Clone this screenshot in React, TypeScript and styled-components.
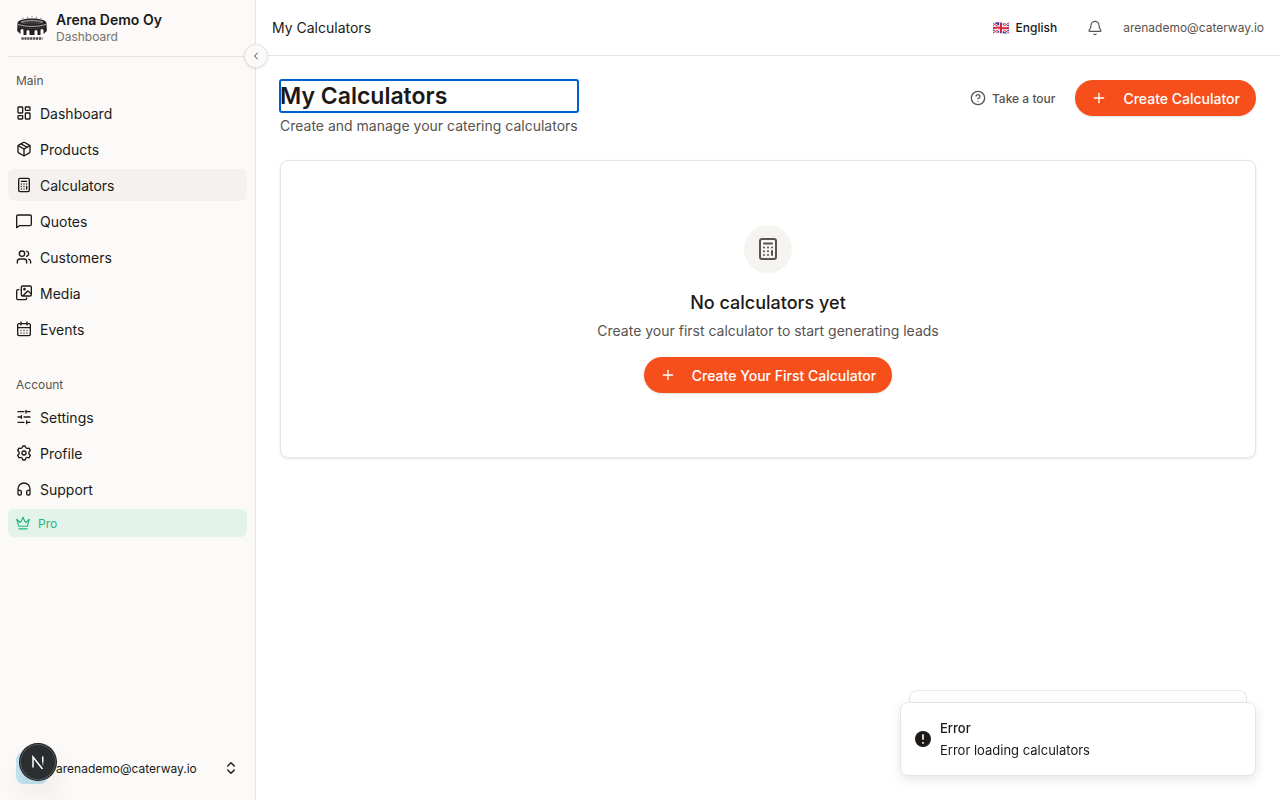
import React from "react";
import styled, { createGlobalStyle, css } from "styled-components";
import { Bell, ChevronLeft, ChevronsUpDown, CircleHelp, Headphones, LayoutDashboard, Package, Plus, Users } from "lucide-react";

const GlobalStyle = createGlobalStyle`
  *, *::before, *::after { box-sizing: border-box; }
  body {
    margin: 0;
    background: #fff;
    color: #1c1917;
    font-family: Inter, "Liberation Sans", sans-serif;
    font-size: 14px;
  }
  h1, h2, p, ul { margin: 0; padding: 0; }
  ul { list-style: none; }
  button { font: inherit; color: inherit; border: 0; padding: 0; background: none; cursor: pointer; }
  a { color: inherit; text-decoration: none; }
  svg { display: block; flex: none; }
`;

const Shell = styled.div`
  display: flex;
  min-height: 100vh;
`;

const Sidebar = styled.aside`
  position: sticky;
  top: 0;
  flex: none;
  display: flex;
  flex-direction: column;
  width: 256px;
  height: 100vh;
  padding: 0 8px 8px;
  background: #fbfaf8;
  border-right: 1px solid #e5e4e2;
`;

const Brand = styled.div`
  display: flex;
  align-items: center;
  gap: 8px;
  height: 57px;
  padding: 0 8px;
  border-bottom: 1px solid #e5e4e2;
`;

const BrandText = styled.div`
  display: flex;
  flex-direction: column;
`;

const BrandName = styled.span`
  font-size: 14px;
  font-weight: 600;
  line-height: 18px;
`;

const BrandSub = styled.span`
  font-size: 12px;
  line-height: 16px;
  color: #78716c;
`;

const CollapseButton = styled.button`
  position: absolute;
  top: 44px;
  right: -13px;
  z-index: 1;
  display: grid;
  place-items: center;
  width: 24px;
  height: 24px;
  border: 1px solid #e5e4e2;
  border-radius: 50%;
  background: #fbfaf8;
  color: #44403c;
  box-shadow: 0 1px 3px rgba(0, 0, 0, 0.1);
`;

const Nav = styled.nav`
  display: flex;
  flex-direction: column;
  gap: 24px;
  padding-top: 8px;
`;

const GroupLabel = styled.h2`
  padding: 0 8px;
  font-size: 12px;
  font-weight: 400;
  line-height: 32px;
  color: #57534e;
`;

const NavList = styled.ul`
  display: flex;
  flex-direction: column;
  gap: 4px;
`;

const NavLink = styled.a<{ $active?: boolean }>`
  display: flex;
  align-items: center;
  gap: 8px;
  height: 32px;
  padding: 0 8px;
  border-radius: 6px;
  ${(p) => p.$active && css`background: #f5f1ee;`}
`;

const PlanLink = styled.a`
  display: flex;
  align-items: center;
  gap: 8px;
  height: 28px;
  padding: 0 8px;
  border-radius: 6px;
  background: #e3f3eb;
  color: #1fb981;
  font-size: 12px;
`;

const UserButton = styled.button`
  display: flex;
  align-items: center;
  gap: 8px;
  height: 48px;
  margin-top: auto;
  padding: 0 8px;
  font-size: 12px;
  text-align: left;
`;

const Avatar = styled.span`
  width: 32px;
  height: 32px;
  border-radius: 8px;
  background: #c4e4f1;
`;

const UserEmail = styled.span`
  flex: 1;
`;

const DevBadge = styled.button`
  position: fixed;
  left: 20px;
  bottom: 20px;
  z-index: 2;
  display: grid;
  place-items: center;
  width: 36px;
  height: 36px;
  border-radius: 50%;
  background: #2a2e30;
  box-shadow: 0 0 0 1px #171717, inset 0 0 0 1px #55585a, 0 16px 32px -8px rgba(0, 0, 0, 0.24);
`;

const Page = styled.div`
  flex: 1;
  min-width: 0;
`;

const TopBar = styled.header`
  display: flex;
  align-items: center;
  justify-content: space-between;
  height: 56px;
  padding: 0 16px;
  border-bottom: 1px solid #e5e4e2;
`;

const TopActions = styled.div`
  display: flex;
  align-items: center;
  gap: 20px;
  font-size: 12px;
  color: #57534e;
`;

const LanguageButton = styled.button`
  display: flex;
  align-items: center;
  gap: 7px;
  margin-right: 10px;
  font-weight: 500;
  color: #1c1917;
`;

const Content = styled.main`
  display: flex;
  flex-direction: column;
  gap: 24px;
  padding: 24px;
`;

const Heading = styled.div`
  display: flex;
  align-items: flex-start;
  justify-content: space-between;
`;

const Title = styled.h1`
  margin-bottom: 4px;
  border-radius: 2px;
  outline: 2px solid #005fcc;
  outline-offset: -1px;
  font-size: 23px;
  font-weight: 600;
  line-height: 32px;
`;

const Muted = styled.p`
  font-size: 14px;
  line-height: 20px;
  color: #57534e;
`;

const Actions = styled.div`
  display: flex;
  align-items: center;
  gap: 20px;
`;

const TourButton = styled.button`
  display: flex;
  align-items: center;
  gap: 6px;
  font-size: 12px;
  font-weight: 500;
  color: #57534e;
`;

const PrimaryButton = styled.button`
  display: flex;
  align-items: center;
  gap: 16px;
  height: 36px;
  padding: 0 16px;
  border-radius: 18px;
  background: #f64f1b;
  color: #fff;
  font-size: 14px;
  font-weight: 500;
  box-shadow: 0 1px 2px rgba(0, 0, 0, 0.12);
`;

const EmptyCard = styled.section`
  display: flex;
  flex-direction: column;
  align-items: center;
  padding: 64px;
  border: 1px solid #e5e4e2;
  border-radius: 8px;
  box-shadow: 0 1px 3px rgba(0, 0, 0, 0.1);
`;

const EmptyIcon = styled.div`
  display: grid;
  place-items: center;
  width: 48px;
  height: 48px;
  margin-bottom: 16px;
  border-radius: 50%;
  background: #f5f4f0;
  color: #57534e;
`;

const EmptyTitle = styled.h2`
  margin-bottom: 4px;
  font-size: 18px;
  font-weight: 500;
  line-height: 28px;
`;

const EmptyText = styled(Muted)`
  margin-bottom: 16px;
`;

const Toaster = styled.div`
  position: fixed;
  right: 24px;
  bottom: 24px;
  width: 356px;
`;

const ToastBehind = styled.div`
  height: 12px;
  margin: 0 9px;
  border: 1px solid #ece7e4;
  border-bottom: 0;
  border-radius: 8px 8px 0 0;
  background: #fff;
`;

const Toast = styled.div`
  display: flex;
  align-items: center;
  gap: 9px;
  padding: 15px 14px;
  border: 1px solid #e7e5e4;
  border-radius: 8px;
  background: #fff;
  font-size: 13px;
  box-shadow: 0 4px 12px rgba(0, 0, 0, 0.1);
`;

const ToastText = styled.div`
  display: flex;
  flex-direction: column;
  gap: 2px;
  line-height: 20px;
`;

const ToastTitle = styled.span`
  font-weight: 500;
`;

const Stroke = ({ size = 16, width = 2, children }: { size?: number; width?: number; children: React.ReactNode }) => (
  <svg width={size} height={size} viewBox="0 0 24 24" fill="none" stroke="currentColor" strokeWidth={width} strokeLinecap="round" strokeLinejoin="round" aria-hidden="true">
    {children}
  </svg>
);

const CalculatorIcon = ({ size }: { size?: number }) => (
  <Stroke size={size}>
    <rect x="4" y="2" width="16" height="20" rx="2" />
    <path d="M8 6.5h8M16 14v4M16 10.5h.01M12 10.5h.01M8 10.5h.01M12 14.2h.01M8 14.2h.01M12 18h.01M8 18h.01" />
  </Stroke>
);

const QuoteIcon = () => (
  <Stroke>
    <path d="M21 3H3a2 2 0 0 0-2 2v17l4-3h16a2 2 0 0 0 2-2V5a2 2 0 0 0-2-2z" />
  </Stroke>
);

const MediaIcon = () => (
  <Stroke>
    <rect x="8" y="1.5" width="15" height="15" rx="2" />
    <path d="M4.5 7H3a2 2 0 0 0-2 2v11a2 2 0 0 0 2 2h11a2 2 0 0 0 2-2v-.5M10.5 16l7-7 5.5 4" />
    <circle cx="12.7" cy="6.3" r="1" />
  </Stroke>
);

const EventsIcon = () => (
  <Stroke>
    <rect x="2.5" y="4" width="19" height="18" rx="2" />
    <path d="M7.5 1.5V6M16.5 1.5V6M2.5 10h19M7.5 14h.01M12 14h.01M16.5 14h.01M7.5 18h.01M12 18h.01M16.5 18h.01" />
  </Stroke>
);

const SlidersIcon = () => (
  <Stroke>
    <path d="M3 4h9M16 4h5M15 2v4M3 12h5M12 12h9M8 10v4M3 20h9M16 20h5M16 18v4" />
  </Stroke>
);

const GearIcon = () => (
  <Stroke>
    <path d="M9.6 3.2 10.3 1.5h3.4l.7 1.7c.4 1.4 1.9 2.2 3.4 1.8l1.8-.3 1.9 3.2-1.2 1.5a3.3 3.3 0 0 0 0 4.9l1.2 1.5-1.9 3.3-1.8-.3c-1.5-.4-3 .5-3.4 1.9l-.7 1.8h-3.4l-.7-1.8c-.4-1.4-1.9-2.3-3.4-1.9l-1.8.3-1.9-3.3 1.2-1.5a3.3 3.3 0 0 0 0-4.9L2.5 7.9l1.9-3.2 1.8.3c1.500.4 3-.4 3.400-1.800z" />
    <circle cx="12" cy="12" r="3" />
  </Stroke>
);

const CrownIcon = () => (
  <Stroke size={14}>
    <path d="M4.5 17.5 2 7l5.5 4L12 3l4.5 8L22 7l-2.5 10.5zM5 22h14" />
    <circle cx="12" cy="3" r=".6" />
    <circle cx="1.8" cy="6.5" r=".6" />
    <circle cx="22.2" cy="6.5" r=".6" />
  </Stroke>
);

const StadiumLogo = () => (
  <svg width="32" height="32" viewBox="0 0 32 32" role="img" aria-label="Arena Demo Oy">
    <path d="M7 7V5.500M11.500 6V4.500M16 5.500V4M20.500 6V4.500M25 7V5.500" stroke="#999" strokeWidth="1" />
    <path d="M1.500 11C2 8 8 6.500 16 6.500s14 1.500 14.500 4.500l.3 8-3.300 3v-4q-1.500-2-3 0v5h-3v-4q-1.500-2-3 0v4h-5v-4q-1.500-2-3 0v4H7.500v-5q-1.500-2-3 0v4L1.200 19z" fill="#231f20" />
    <ellipse cx="16" cy="10" rx="11.500" ry="2.200" fill="#8b8987" />
    <ellipse cx="16" cy="10.800" rx="9" ry="1.500" fill="#3a3736" />
    <path d="M2 12.500q14 4 28 0" fill="none" stroke="#d6d4d2" strokeWidth=".8" />
    <path d="M3 15q13 3 26 0" fill="none" stroke="#777" strokeDasharray="1 1" strokeWidth=".8" />
    <path d="M5.500 26.500h21" stroke="#4a4746" strokeWidth="2.500" strokeDasharray="2.200 .7" />
  </svg>
);

const FlagIcon = () => (
  <svg width="16" height="12" viewBox="0 0 16 12" aria-hidden="true">
    <path d="M0 1.5Q4-.5 8 .8T16 .5v10.200q-4 1.500-8 .4T0 11.300z" fill="#29439b" />
    <path d="M0 1.5 16 11M0 11 16 .8" stroke="#fff" strokeWidth="2.4" />
    <path d="M0 1.5 16 11M0 11 16 .8" stroke="#d5243b" strokeWidth="1" />
    <path d="M8 .6v10.700M0 6.200q4-1 8-.3t8-.3" fill="none" stroke="#fff" strokeWidth="3.6" />
    <path d="M8 .6v10.700M0 6.200q4-1 8-.3t8-.3" fill="none" stroke="#d5243b" strokeWidth="2" />
  </svg>
);

const ErrorIcon = () => (
  <svg width="16" height="16" viewBox="0 0 16 16" aria-hidden="true">
    <circle cx="8" cy="8" r="8" fill="#1c1917" />
    <path d="M8 3.2v5.600M8 11v1.800" stroke="#fff" strokeWidth="1.6" />
  </svg>
);

const DevLogo = () => (
  <svg width="14" height="14" viewBox="0 0 14 14" fill="none" aria-hidden="true">
    <defs>
      <linearGradient id="fade" x1="0" y1="0" x2="0" y2="1">
        <stop offset=".4" stopColor="#fff" />
        <stop offset="1" stopColor="#fff" stopOpacity="0" />
      </linearGradient>
    </defs>
    <path d="M2 12.5V2l9.500 12" stroke="#fff" strokeWidth="1.5" />
    <rect x="11" y="1.5" width="1.5" height="10" fill="url(#fade)" />
  </svg>
);

const mainItems = [
  { label: "Dashboard", icon: <LayoutDashboard size={16} /> },
  { label: "Products", icon: <Package size={16} /> },
  { label: "Calculators", icon: <CalculatorIcon />, active: true },
  { label: "Quotes", icon: <QuoteIcon /> },
  { label: "Customers", icon: <Users size={16} /> },
  { label: "Media", icon: <MediaIcon /> },
  { label: "Events", icon: <EventsIcon /> },
];

const accountItems = [
  { label: "Settings", icon: <SlidersIcon /> },
  { label: "Profile", icon: <GearIcon /> },
  { label: "Support", icon: <Headphones size={16} /> },
];

type Item = { label: string; icon: React.ReactNode; active?: boolean };

const NavGroup = ({ title, items, children }: { title: string; items: Item[]; children?: React.ReactNode }) => (
  <div>
    <GroupLabel>{title}</GroupLabel>
    <NavList>
      {items.map((item) => (
        <li key={item.label}>
          <NavLink href="#" $active={item.active} aria-current={item.active ? "page" : undefined}>
            {item.icon}
            {item.label}
          </NavLink>
        </li>
      ))}
      {children}
    </NavList>
  </div>
);

export default function App() {
  return (
    <>
      <GlobalStyle />
      <Shell>
        <Sidebar>
          <Brand>
            <StadiumLogo />
            <BrandText>
              <BrandName>Arena Demo Oy</BrandName>
              <BrandSub>Dashboard</BrandSub>
            </BrandText>
          </Brand>
          <CollapseButton aria-label="Collapse sidebar">
            <ChevronLeft size={12} />
          </CollapseButton>
          <Nav>
            <NavGroup title="Main" items={mainItems} />
            <NavGroup title="Account" items={accountItems}>
              <li>
                <PlanLink href="#">
                  <CrownIcon />
                  Pro
                </PlanLink>
              </li>
            </NavGroup>
          </Nav>
          <UserButton>
            <Avatar />
            <UserEmail>arenademo@caterway.io</UserEmail>
            <ChevronsUpDown size={16} />
          </UserButton>
        </Sidebar>
        <Page>
          <TopBar>
            <span>My Calculators</span>
            <TopActions>
              <LanguageButton>
                <FlagIcon />
                English
              </LanguageButton>
              <button aria-label="Notifications">
                <Bell size={16} strokeWidth={1.75} />
              </button>
              <span>arenademo@caterway.io</span>
            </TopActions>
          </TopBar>
          <Content>
            <Heading>
              <div>
                <Title tabIndex={-1}>My Calculators</Title>
                <Muted>Create and manage your catering calculators</Muted>
              </div>
              <Actions>
                <TourButton>
                  <CircleHelp size={16} />
                  Take a tour
                </TourButton>
                <PrimaryButton>
                  <Plus size={16} />
                  Create Calculator
                </PrimaryButton>
              </Actions>
            </Heading>
            <EmptyCard>
              <EmptyIcon>
                <CalculatorIcon size={24} />
              </EmptyIcon>
              <EmptyTitle>No calculators yet</EmptyTitle>
              <EmptyText>Create your first calculator to start generating leads</EmptyText>
              <PrimaryButton>
                <Plus size={16} />
                Create Your First Calculator
              </PrimaryButton>
            </EmptyCard>
          </Content>
        </Page>
      </Shell>
      <Toaster role="status">
        <ToastBehind />
        <Toast>
          <ErrorIcon />
          <ToastText>
            <ToastTitle>Error</ToastTitle>
            <span>Error loading calculators</span>
          </ToastText>
        </Toast>
      </Toaster>
      <DevBadge aria-label="Open developer tools">
        <DevLogo />
      </DevBadge>
    </>
  );
}
